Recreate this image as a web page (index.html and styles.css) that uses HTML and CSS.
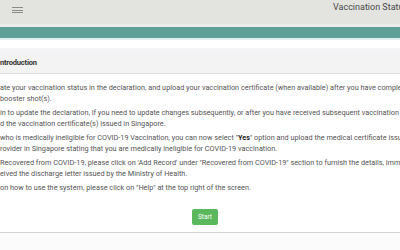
FILE: index.html
```html
<!DOCTYPE html>
<html>
<head>
<meta charset="utf-8">
<link rel="stylesheet" href="styles.css">
</head>
<body>
<header class="topbar">
  <div class="burger"><span></span><span></span><span></span></div>
  <div class="title">Vaccination Status</div>
</header>
<div class="accent"></div>
<div class="spacer"></div>
<main class="page">
  <section class="card">
    <div class="card-head">ntroduction</div>
    <div class="card-body">
      <p>ate your vaccination status in the declaration, and upload your vaccination certificate (when available) after you have completed<br>booster shot(s).</p>
      <p>in to update the declaration, if you need to update changes subsequently, or after you have received subsequent vaccination<br>d the vaccination certificate(s) issued in Singapore.</p>
      <p>who is medically ineligible for COVID-19 Vaccination, you can now select "<b>Yes</b>" option and upload the medical certificate issued<br>rovider in Singapore stating that you are medically ineligible for COVID-19 vaccination.</p>
      <p>Recovered from COVID-19, please click on 'Add Record' under "Recovered from COVID-19" section to furnish the details, immediately<br>eived the discharge letter issued by the Ministry of Health.</p>
      <p>on how to use the system, please click on "Help" at the top right of the screen.</p>
      <div class="actions"><button class="start">Start</button></div>
    </div>
  </section>
</main>
</body>
</html>
```
FILE: styles.css
```css
html, body {
  margin: 0;
  padding: 0;
  width: 400px;
  height: 250px;
  overflow: hidden;
  background: #fbfbfc;
  font-family: Roboto, "Liberation Sans", sans-serif;
}
.topbar {
  height: 24px;
  background: #e3e3e0;
  display: flex;
  align-items: flex-start;
  justify-content: space-between;
  border-bottom: 3px solid #ebebe9;
  white-space: nowrap;
}
.burger {
  margin: 7px 0 0 12px;
  width: 11px;
  display: flex;
  flex-direction: column;
  gap: 1.5px;
}
.burger span {
  display: block;
  height: 1px;
  background: #8a8a8a;
}
.title {
  margin: 1px -20px 0 0;
  font-size: 9px;
  line-height: 12px;
  color: #4a4a4a;
  width: 87px;
}
.accent {
  height: 11px;
  background: #5e9f98;
  border-bottom: 2px solid #dfeeee;
}
.spacer {
  height: 8px;
  background: #ffffff;
}
.page {
  background: #f4f4f6;
  padding-top: 4px;
}
.card {
  margin: 0 -44px 0 -34px;
  background: #ffffff;
  border-bottom: 1px solid #d4d4d4;
}
.card-head {
  height: 21px;
  padding-left: 34px;
  background: #f3f3f3;
  border-bottom: 1px solid #dedede;
  font-size: 7.5px;
  font-weight: bold;
  line-height: 22px;
  color: #333;
  letter-spacing: -0.2px;
}
.card-body {
  padding: 9px 0 7px 34px;
}
.card-body p {
  margin: 0 0 4px 0;
  font-size: 7.3px;
  line-height: 10.5px;
  color: #555;
  white-space: nowrap;
}
.card-body b {
  color: #222;
}
.actions {
  display: flex;
  justify-content: center;
  margin-top: 15px;
  margin-left: -34px;
}
.start {
  width: 26px;
  height: 16px;
  padding: 0;
  border: none;
  border-radius: 2px;
  background: #5cb85c;
  color: #fff;
  font-family: Roboto, "Liberation Sans", sans-serif;
  font-size: 6.5px;
}
```
